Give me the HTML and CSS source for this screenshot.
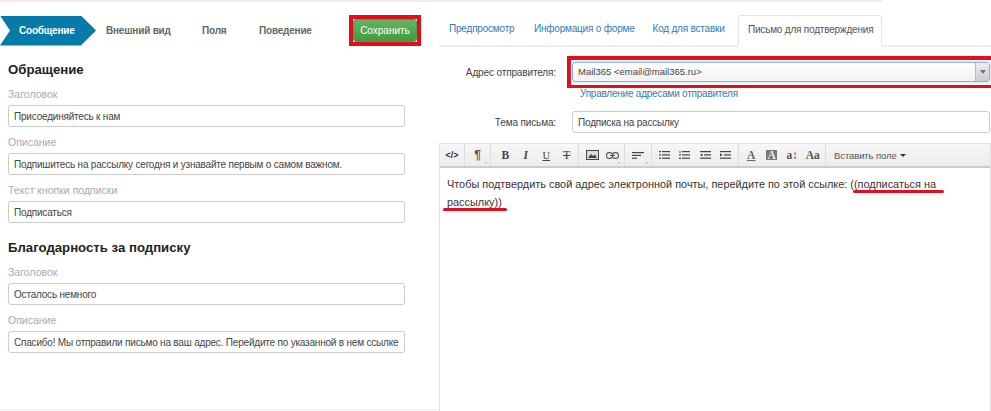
FILE: index.html
```html
<!DOCTYPE html>
<html lang="ru">
<head>
<meta charset="utf-8">
<title>Письмо для подтверждения</title>
<link rel="stylesheet" href="styles.css">
</head>
<body>
<div class="topline"></div>
<div class="page">
  <section class="left">
    <div class="steps">
      <a class="step step-active">Сообщение</a>
      <a class="step step-look">Внешний вид</a>
      <a class="step step-fields">Поля</a>
      <a class="step step-behave">Поведение</a>
      <span class="save-wrap"><button class="save">Сохранить</button></span>
    </div>
    <h2 class="h-first">Обращение</h2>
    <label>Заголовок</label>
    <div class="input">Присоединяйтесь к нам</div>
    <label>Описание</label>
    <div class="input">Подпишитесь на рассылку сегодня и узнавайте первым о самом важном.</div>
    <label>Текст кнопки подписки</label>
    <div class="input">Подписаться</div>
    <h2 class="h-second">Благодарность за подписку</h2>
    <label>Заголовок</label>
    <div class="input">Осталось немного</div>
    <label>Описание</label>
    <div class="input">Спасибо! Мы отправили письмо на ваш адрес. Перейдите по указанной в нем ссылке</div>
  </section>
  <section class="right">
    <div class="tabs">
      <a class="tab tab-1">Предпросмотр</a>
      <a class="tab tab-2">Информация о форме</a>
      <a class="tab tab-3">Код для вставки</a>
      <a class="tab tab-active">Письмо для подтверждения</a>
    </div>
    <div class="row row-from">
      <span class="row-label">Адрес отправителя:</span>
      <div class="select-hl">
        <div class="select"><span class="select-text">Mail365 &lt;email@mail365.ru&gt;</span><span class="select-arrow"><i></i></span></div>
      </div>
    </div>
    <a class="manage">Управление адресами отправителя</a>
    <div class="row row-subject">
      <span class="row-label">Тема письма:</span>
      <div class="input input-subject">Подписка на рассылку</div>
    </div>
    <div class="editor">
      <div class="toolbar">
        <div class="group g-1"><span class="btn code">&lt;/&gt;</span></div>
        <div class="group g-2"><span class="btn para drop">¶</span></div>
        <div class="group g-3">
          <span class="btn serif bold">B</span>
          <span class="btn serif ital">I</span>
          <span class="btn serif under">U</span>
          <span class="btn serif strike">T</span>
        </div>
        <div class="group g-4">
          <span class="btn"><svg width="13" height="10" viewBox="0 0 13 10"><rect x="0.5" y="0.5" width="12" height="9" fill="#ddd" stroke="#444"/><path d="M2 8l3-4 2 2 2-1.500 2 3.500z" fill="#444"/></svg></span>
          <span class="btn drop"><svg width="13" height="7" viewBox="0 0 13 7" fill="none" stroke="#555" stroke-width="1.100"><rect x="0.600" y="0.600" width="5.800" height="5.800" rx="2.500"/><rect x="6.600" y="0.600" width="5.800" height="5.800" rx="2.500"/><path d="M4 3.500h5"/></svg></span>
        </div>
        <div class="group g-5">
          <span class="btn drop"><svg width="12" height="7" viewBox="0 0 12 7" fill="#444"><rect width="12" height="1.200"/><rect y="2.800" width="9" height="1.200"/><rect y="5.600" width="5" height="1.200"/></svg></span>
        </div>
        <div class="group g-6">
          <span class="btn"><svg width="11" height="8" viewBox="0 0 11 8" fill="#444"><rect width="2" height="1.200"/><rect y="3.300" width="2" height="1.200"/><rect y="6.600" width="2" height="1.200"/><rect x="3" width="8" height="1.200"/><rect x="3" y="3.300" width="8" height="1.200"/><rect x="3" y="6.600" width="8" height="1.200"/></svg></span>
          <span class="btn"><svg width="11" height="8" viewBox="0 0 11 8" fill="#444"><rect x="0.500" width="1" height="1.800"/><rect y="3.300" width="2" height="1.200"/><rect y="6.600" width="2" height="1.200"/><rect x="3" width="8" height="1.200"/><rect x="3" y="3.300" width="8" height="1.200"/><rect x="3" y="6.600" width="8" height="1.200"/></svg></span>
          <span class="btn"><svg width="11" height="8" viewBox="0 0 11 8" fill="#444"><rect width="11" height="1.200"/><rect x="4" y="3.300" width="7" height="1.200"/><rect y="6.600" width="11" height="1.200"/><path d="M0 3.900l2.500-1.700v3.400z"/></svg></span>
          <span class="btn"><svg width="11" height="8" viewBox="0 0 11 8" fill="#444"><rect width="11" height="1.200"/><rect x="4" y="3.300" width="7" height="1.200"/><rect y="6.600" width="11" height="1.200"/><path d="M2.500 3.900l-2.500-1.700v3.400z"/></svg></span>
        </div>
        <div class="group g-7">
          <span class="btn serif bold font-a">A</span>
          <span class="btn serif bold font-bg">A</span>
          <span class="btn serif bold size">a↕</span>
          <span class="btn serif bold case">Aa</span>
        </div>
        <div class="group g-8"><span class="insert">Вставить поле</span><i class="caret"></i></div>
      </div>
      <div class="editor-body">
        <p>Чтобы подтвердить свой адрес электронной почты, перейдите по этой ссылке: ((подписаться на рассылку))</p>
        <span class="mark mark-1"></span>
        <span class="mark mark-2"></span>
      </div>
    </div>
  </section>
</div>
</body>
</html>
```
FILE: styles.css
```css
* { box-sizing: border-box; }
html, body { margin: 0; height: 411px; overflow: hidden; background: #fff; }
body { font-family: "Liberation Sans", Arial, sans-serif; color: #333; }

.topline { width: 882px; height: 2px; background: #eee; }
.page { display: flex; height: 409px; }

.left { width: 439px; height: 408px; padding-left: 8px; padding-right: 34px; border-bottom: 1px solid #eee; flex: none; }
.steps { display: flex; align-items: center; height: 31px; margin: 13px 0 0 -8px; font-size: 10px; letter-spacing: -0.2px; font-weight: bold; color: #666; white-space: nowrap; }
.step { display: block; flex: none; }
.step-active { width: 96px; height: 30px; line-height: 30px; padding-left: 19px; color: #fff; background: #067aa9; clip-path: polygon(0 0, 81px 0, 96px 50%, 81px 100%, 0 100%, 10px 50%); }
.step-look { margin-left: 10px; width: 96px; }
.step-fields { width: 57px; }
.step-behave { width: 90px; }
.save-wrap { border: 4px solid #e30d1c; display: block; width: 72px; height: 31px; flex: none; }
.save { display: block; width: 64px; height: 23px; padding: 0; border: 1px solid #4c9f4c; border-radius: 3px; background: linear-gradient(#62b562, #439a43); color: #fff; font: 10px "Liberation Sans", Arial, sans-serif; }

h2 { margin: 0; font-size: 13.200px; line-height: 18px; font-weight: bold; color: #222; }
.h-first { margin-top: 15px; }
.h-second { margin-top: 16px; }

label { display: block; font-size: 10.500px; line-height: 14px; color: #aaa; margin-bottom: 4px; }
.h-first + label, .h-second + label { margin-top: 8px; }
.input { height: 22px; line-height: 21px; padding: 0 5px; border: 1px solid #ccc; border-radius: 3px; font-size: 10px; letter-spacing: -0.200px; color: #444; white-space: nowrap; overflow: hidden; margin-bottom: 8px; }

.right { flex: 1; min-width: 0; }
.tabs { display: flex; height: 32px; margin-top: 13px; border-bottom: 2px solid #eee; font-size: 10px; letter-spacing: -0.200px; color: #337ab7; white-space: nowrap; }
.tab { display: block; line-height: 27px; flex: none; }
.tab-1 { margin-left: 10px; width: 85px; }
.tab-2 { width: 118.500px; }
.tab-3 { width: 85.500px; }
.tab-active { padding: 0 9px; width: 144px; height: 32px; color: #555; background: #fff; border: 1px solid #e4e4e4; border-bottom: 2px solid #fff; border-radius: 3px 3px 0 0; }

.row { display: flex; align-items: center; }
.row-label { width: 117px; text-align: right; font-size: 10px; letter-spacing: -0.130px; color: #444; flex: none; }
.row-from { margin-top: 9px; height: 32px; }
.select-hl { margin-left: 11px; flex: 1; height: 32px; padding: 2px 0 0 1px; border: solid #e30d1c; border-width: 4px 0 3px 4px; }
.select { display: flex; height: 20px; margin-right: 1px; border: 1px solid #8ab4e6; border-radius: 3px; font-size: 9.500px; color: #444; line-height: 18px; background: linear-gradient(#fff, #f2f2f2); box-shadow: 0 0 3px #a9c8ee; }
.select-text { flex: 1; padding-left: 5px; }
.select-arrow { width: 14px; background: linear-gradient(#eee, #ccc); border-left: 1px solid #bbb; display: flex; align-items: center; justify-content: center; }
.select-arrow i { border: 3px solid transparent; border-top: 4px solid #777; border-bottom: 0; }
.manage { display: block; margin: 0 0 0 141px; font-size: 10px; letter-spacing: -0.230px; line-height: 11px; color: #337ab7; }
.row-subject { margin-top: 12px; padding-right: 1px; }
.input-subject { margin: 0 0 0 16px; flex: 1; }

.editor { margin-top: 10px; height: 268px; border: 1px solid #e2e2e2; border-bottom: 0; width: 552px; }
.toolbar { display: flex; height: 24px; background: linear-gradient(#f7f7f7, #ececec); border-bottom: 2px solid #ccc; }
.group { display: flex; align-items: center; height: 22px; border-right: 1px solid #ddd; }
.g-1 { width: 25px; }
.g-2 { width: 26px; }
.g-3 { width: 88px; padding-left: 4px; }
.g-4 { width: 46px; padding-left: 3px; }
.g-5 { width: 27px; }
.g-6 { width: 87px; padding-left: 2px; }
.g-7 { width: 87px; padding-left: 2px; }
.g-8 { border-right: 0; padding-left: 8px; font-size: 9.500px; letter-spacing: -0.100px; color: #555; }
.btn { position: relative; display: flex; align-items: center; justify-content: center; width: 20.500px; height: 22px; color: #444; font-size: 11px; }
.g-1 .btn, .g-2 .btn, .g-5 .btn { width: 100%; }
.drop::after { content: ""; position: absolute; right: 3px; bottom: 2px; border: 1.500px solid transparent; border-top: 2px solid #aaa; border-bottom: 0; }
.code { font-size: 9px; font-weight: bold; color: #333; }
.para { font-size: 12px; font-weight: bold; color: #555; }
.serif { font-family: "Liberation Serif", serif; font-size: 11.500px; }
.bold { font-weight: bold; }
.ital { font-style: italic; font-weight: bold; }
.under { text-decoration: underline; font-size: 10.500px; }
.strike { text-decoration: line-through; font-size: 12px; font-weight: normal; }
.font-a { text-decoration: underline; color: #666; }
.font-bg { color: #eee; background: linear-gradient(#777, #777) center / 11px 10px no-repeat; }
.size, .case { color: #555; }
.caret { margin-left: 3px; border: 3px solid transparent; border-top: 3px solid #333; border-bottom: 0; }

.editor-body { position: relative; padding: 7px 7px; font-size: 10.900px; line-height: 18px; color: #333; }
.editor-body p { margin: 0; width: 500px; }
.mark { position: absolute; height: 3px; background: #e30d1c; border-radius: 2px; }
.mark-1 { left: 413px; top: 22px; width: 91px; }
.mark-2 { left: 3px; top: 40px; width: 64px; }
```
